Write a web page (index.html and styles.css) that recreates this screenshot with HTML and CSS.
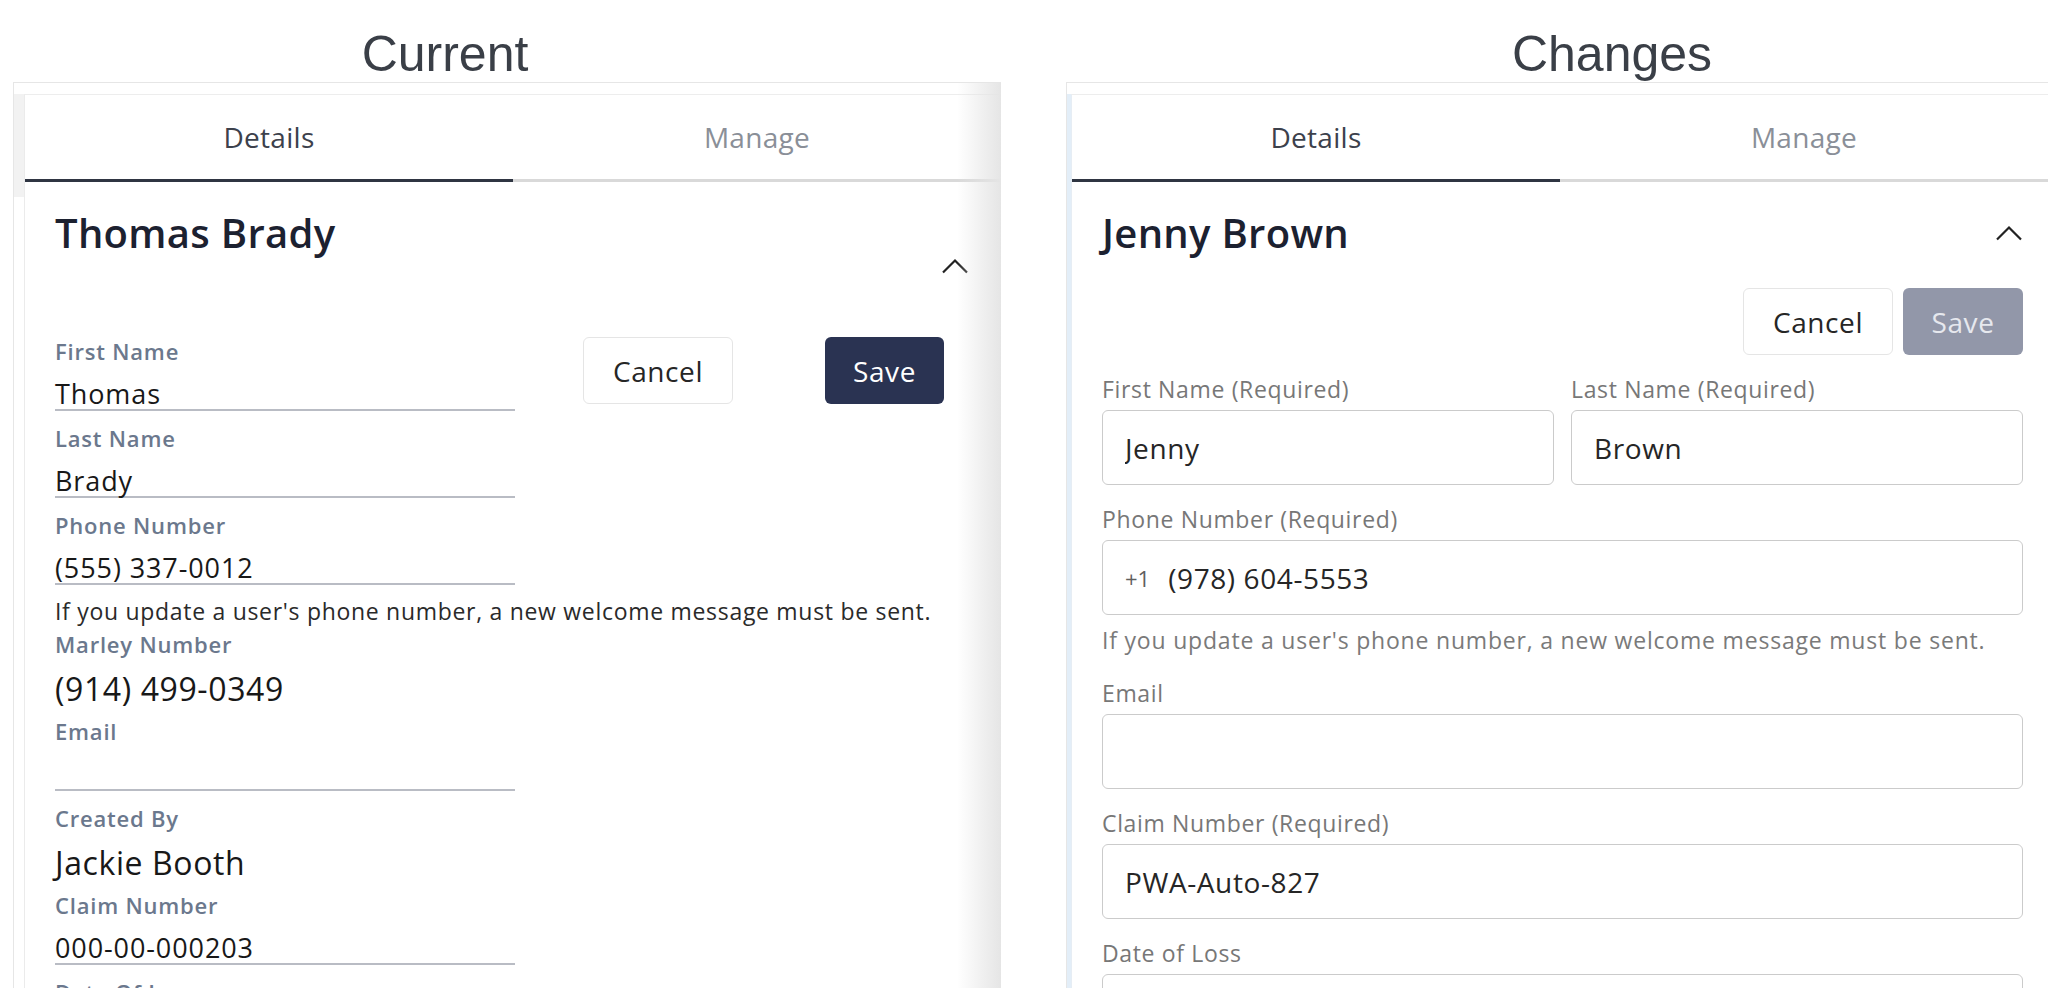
FILE: index.html
```html
<!DOCTYPE html>
<html lang="en">
<head>
    <meta charset="UTF-8">
    <meta name="viewport" content="width=device-width, initial-scale=1.0">
    <meta name="description" content="User details - current values next to pending changes">
    <title>User Details - Current vs Changes</title>
    <link rel="stylesheet" href="styles.css">
</head>
<body>
    <main class="compare">
        <!-- Current (read only) -->
        <section class="side side-current">
            <h2 class="side-title">Current</h2>
            <div class="panel">
                <div class="panel-gutter"></div>
                <div class="card">
                    <nav class="tabs">
                        <button class="tab active">Details</button>
                        <button class="tab">Manage</button>
                    </nav>
                    <div class="profile">
                        <div class="profile-head">
                            <h3 class="profile-name">Thomas Brady</h3>
                            <svg class="chevron chevron-low" viewBox="0 0 28 16" fill="none" stroke="currentColor" stroke-width="2.2">
                                <polyline points="2,14.5 14,2.5 26,14.5"/>
                            </svg>
                        </div>

                        <div class="current-form">
                            <div class="fields">
                                <div class="field">
                                    <div class="field-label">First Name</div>
                                    <div class="field-line">Thomas</div>
                                </div>
                                <div class="field">
                                    <div class="field-label">Last Name</div>
                                    <div class="field-line">Brady</div>
                                </div>
                                <div class="field">
                                    <div class="field-label">Phone Number</div>
                                    <div class="field-line">(555) 337-0012</div>
                                </div>
                                <p class="field-hint">If you update a user's phone number, a new welcome message must be sent.</p>
                                <div class="field">
                                    <div class="field-label">Marley Number</div>
                                    <div class="field-static">(914) 499-0349</div>
                                </div>
                                <div class="field">
                                    <div class="field-label">Email</div>
                                    <div class="field-line"></div>
                                </div>
                                <div class="field">
                                    <div class="field-label">Created By</div>
                                    <div class="field-static">Jackie Booth</div>
                                </div>
                                <div class="field">
                                    <div class="field-label">Claim Number</div>
                                    <div class="field-line">000-00-000203</div>
                                </div>
                                <div class="field">
                                    <div class="field-label">Date Of Loss</div>
                                    <div class="field-line"></div>
                                </div>
                            </div>
                            <div class="actions">
                                <button class="btn btn-cancel">Cancel</button>
                                <button class="btn btn-save">Save</button>
                            </div>
                        </div>
                    </div>
                </div>
            </div>
        </section>

        <!-- Changes (editable) -->
        <section class="side side-changes">
            <h2 class="side-title">Changes</h2>
            <div class="panel">
                <div class="panel-gutter tint"></div>
                <div class="card">
                    <nav class="tabs">
                        <button class="tab active">Details</button>
                        <button class="tab">Manage</button>
                    </nav>
                    <div class="profile">
                        <div class="profile-head">
                            <h3 class="profile-name">Jenny Brown</h3>
                            <svg class="chevron" viewBox="0 0 28 16" fill="none" stroke="currentColor" stroke-width="2.2">
                                <polyline points="2,14.5 14,2.5 26,14.5"/>
                            </svg>
                        </div>

                        <div class="edit-actions">
                            <button class="btn btn-cancel">Cancel</button>
                            <button class="btn btn-save" disabled>Save</button>
                        </div>

                        <div class="edit-grid">
                            <div class="edit-field">
                                <label for="firstName">First Name (Required)</label>
                                <div class="input-box">
                                    <input type="text" id="firstName" value="Jenny">
                                </div>
                            </div>
                            <div class="edit-field">
                                <label for="lastName">Last Name (Required)</label>
                                <div class="input-box">
                                    <input type="text" id="lastName" value="Brown">
                                </div>
                            </div>
                        </div>

                        <div class="edit-field">
                            <label for="phone">Phone Number (Required)</label>
                            <div class="input-box">
                                <span class="dial-code">+1</span>
                                <input type="tel" id="phone" value="(978) 604-5553">
                            </div>
                        </div>
                        <p class="edit-hint">If you update a user's phone number, a new welcome message must be sent.</p>

                        <div class="edit-field">
                            <label for="email">Email</label>
                            <div class="input-box">
                                <input type="email" id="email" value="">
                            </div>
                        </div>

                        <div class="edit-field">
                            <label for="claim">Claim Number (Required)</label>
                            <div class="input-box">
                                <input type="text" id="claim" value="PWA-Auto-827">
                            </div>
                        </div>

                        <div class="edit-field">
                            <label for="dateOfLoss">Date of Loss</label>
                            <div class="input-box">
                                <input type="text" id="dateOfLoss" value="">
                            </div>
                        </div>
                    </div>
                </div>
            </div>
        </section>
    </main>
</body>
</html>
```

FILE: styles.css
```css
* {
    margin: 0;
    padding: 0;
    box-sizing: border-box;
}

html, body {
    overflow: hidden;
}

body {
    font-family: 'Open Sans', 'Noto Sans', sans-serif;
    background-color: #FFFFFF;
    color: #1C1C1C;
}

.compare {
    display: flex;
    gap: 65px;
    padding-left: 13px;
}

.side-current {
    width: 988px;
    flex-shrink: 0;
}

.side-changes {
    flex: 1;
    min-width: 0;
}

.side-title {
    font-family: 'Liberation Sans', Arial, sans-serif;
    font-weight: 400;
    font-size: 50px;
    line-height: 56px;
    padding-top: 26px;
    color: #3A3F47;
    text-align: center;
}

.side-current .side-title {
    padding-right: 124px;
}

.side-changes .side-title {
    padding-left: 110px;
}

.panel {
    position: relative;
    display: flex;
    align-items: flex-start;
    border-top: 1px solid #E6E6E6;
    border-left: 1px solid #E6E6E6;
    padding-top: 11px;
    min-height: 920px;
}

/* soft fade on the right edge of the current panel */
.side-current .panel::after {
    content: '';
    position: absolute;
    top: 0;
    right: 0;
    bottom: 0;
    width: 44px;
    background: linear-gradient(to right, rgba(230,230,230,0), #E5E5E5);
    pointer-events: none;
}

.panel-gutter {
    width: 10px;
    height: 103px;
    background-color: #F2F2F2;
    flex-shrink: 0;
}

.panel-gutter.tint {
    width: 4px;
    height: auto;
    align-self: stretch;
    background-color: #E3EEF8;
}

.card {
    flex: 1;
    min-height: 900px;
    border-top: 1px solid #EDEDED;
    border-left: 1px solid #EBEBEB;
}

.side-changes .card {
    border-left-color: #E6EDF4;
}

.tabs {
    display: flex;
}

.tab {
    flex: 1;
    height: 87px;
    border: none;
    border-bottom: 3px solid #D9D9D9;
    background: none;
    font-family: inherit;
    font-size: 28px;
    letter-spacing: 0.3px;
    color: #8A8F98;
    cursor: pointer;
}

.tab.active {
    border-bottom-color: #2F3542;
    color: #3C414C;
}

.profile {
    padding: 28px 32px 0 30px;
}

.side-changes .profile {
    padding: 28px 25px 0 30px;
}

.profile-head {
    display: flex;
    justify-content: space-between;
    align-items: center;
}

.profile-name {
    font-size: 40px;
    line-height: 46px;
    font-weight: 600;
    letter-spacing: 0.3px;
    color: #1C2130;
}

.chevron {
    width: 28px;
    height: 16px;
    flex-shrink: 0;
    color: #222222;
}

.chevron-low {
    align-self: flex-end;
    margin-bottom: -18px;
}

/* ---- current (read only) ---- */

.current-form {
    display: flex;
    align-items: flex-start;
    margin-top: 81px;
}

.fields {
    width: 460px;
    flex-shrink: 0;
}

.field + .field {
    margin-top: 13px;
}

.field-label {
    font-size: 22px;
    line-height: 28px;
    font-weight: 600;
    letter-spacing: 0.8px;
    color: #6B788D;
}

.field-line {
    margin-top: 14px;
    height: 32px;
    font-size: 27px;
    line-height: 30px;
    letter-spacing: 0.9px;
    border-bottom: 2px solid #B9BCC4;
    color: #181818;
}

.field-static {
    margin-top: 13px;
    margin-bottom: -3px;
    font-size: 32px;
    line-height: 36px;
    letter-spacing: 0.6px;
    color: #181818;
}

.field-hint {
    margin-top: 12px;
    font-size: 23px;
    line-height: 28px;
    letter-spacing: 0.7px;
    white-space: nowrap;
    color: #2A2A2A;
}

.field-hint + .field {
    margin-top: 5px;
}

.actions {
    display: flex;
    justify-content: space-between;
    width: 361px;
    margin-left: 68px;
}

.btn {
    height: 67px;
    border-radius: 6px;
    font-family: inherit;
    font-size: 28px;
    letter-spacing: 0.6px;
    cursor: pointer;
}

.btn-cancel {
    width: 150px;
    background-color: #FFFFFF;
    border: 1px solid #E5E5E5;
    color: #262626;
}

.btn-save {
    width: 119px;
    background-color: #2A3352;
    border: none;
    color: #FFFFFF;
}

.btn-save:disabled {
    width: 120px;
    background-color: #9297A9;
    color: #E6E8EE;
    cursor: default;
}

/* ---- changes (editable) ---- */

.edit-actions {
    display: flex;
    justify-content: flex-end;
    gap: 10px;
    margin-top: 32px;
}

.edit-grid {
    display: grid;
    grid-template-columns: 1fr 1fr;
    column-gap: 17px;
    margin-top: 20px;
}

.edit-grid .edit-field {
    margin-top: 0;
}

.edit-field {
    margin-top: 20px;
}

.edit-field label {
    display: block;
    margin-bottom: 7px;
    font-size: 23px;
    line-height: 28px;
    letter-spacing: 0.65px;
    color: #777777;
}

.input-box {
    display: flex;
    align-items: center;
    height: 75px;
    padding: 0 22px;
    border: 1px solid #CBCBCB;
    border-radius: 6px;
    font-size: 28px;
}

.input-box input {
    flex: 1;
    min-width: 0;
    border: none;
    outline: none;
    background: transparent;
    font-family: inherit;
    font-size: inherit;
    letter-spacing: 0.6px;
    color: #262626;
}

.dial-code {
    margin-right: 18px;
    font-size: 22px;
    color: #5F5F5F;
}

.edit-hint {
    margin-top: 11px;
    font-size: 23px;
    line-height: 28px;
    letter-spacing: 0.8px;
    white-space: nowrap;
    color: #7A7A7A;
}

.edit-hint + .edit-field {
    margin-top: 25px;
}
```
